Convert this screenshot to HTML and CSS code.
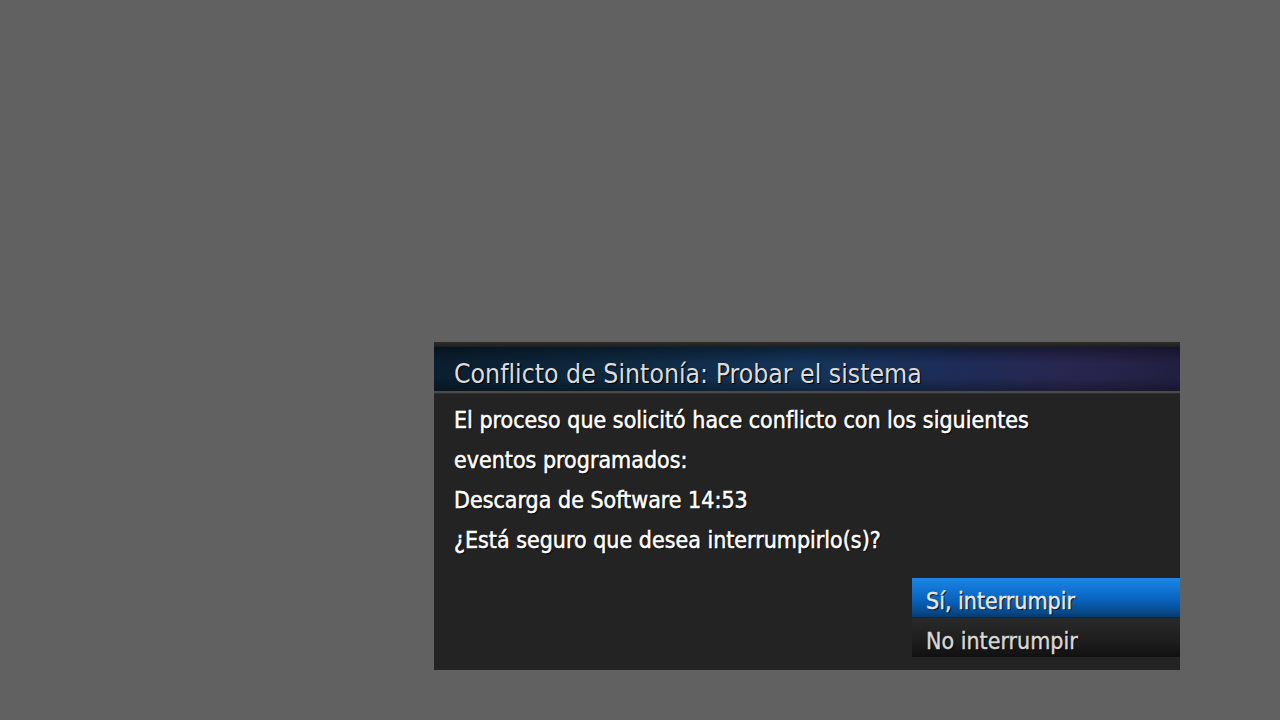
FILE: index.html
```html
<!DOCTYPE html>
<html lang="es">
<head>
<meta charset="utf-8">
<title>Conflicto de Sintonía</title>
<link rel="stylesheet" href="styles.css">
</head>
<body>
<div class="stage">
  <div class="dialog">
    <div class="topstrip"></div>
    <div class="header">Conflicto de Sintonía: Probar el sistema</div>
    <div class="rule"></div>
    <div class="body">
      <p class="line">El proceso que solicitó hace conflicto con los siguientes</p>
      <p class="line">eventos programados:</p>
      <p class="line">Descarga de Software 14:53</p>
      <p class="line">¿Está seguro que desea interrumpirlo(s)?</p>
    </div>
    <div class="options">
      <div class="opt opt-sel">Sí, interrumpir</div>
      <div class="opt opt-norm">No interrumpir</div>
    </div>
  </div>
</div>
</body>
</html>
```
FILE: styles.css
```css
html, body {
  margin: 0;
  padding: 0;
  background: #616161;
}
.stage {
  width: 1280px;
  height: 720px;
  display: flex;
  padding: 342px 0 0 434px;
  box-sizing: border-box;
}
.dialog {
  width: 746px;
  height: 328px;
  background: #232323;
  display: flex;
  flex-direction: column;
  font-family: "DejaVu Sans", sans-serif;
  font-stretch: condensed;
}
.topstrip {
  height: 5px;
  background: linear-gradient(180deg, #2c2c2c, #1e1e1e);
}
.header {
  height: 44px;
  background:
    linear-gradient(180deg, rgba(0,0,0,0.35) 0%, rgba(0,0,0,0) 35%, rgba(0,0,0,0) 70%, rgba(0,0,0,0.3) 100%),
    linear-gradient(90deg, #0a1e2e 0%, #0e2940 25%, #14345a 50%, #1c2d58 68%, #28264f 85%, #211f40 100%);
  color: #dcdcdc;
  font-size: 26.4px;
  line-height: 54px;
  padding-left: 20px;
  overflow: hidden;
  text-shadow: 1px 1px 1px #000;
}
.rule {
  height: 2px;
  background: #4a4a4a;
  border-bottom: 1px solid #2e2e2e;
}
.body {
  padding: 6px 0 0 20px;
  color: #ffffff;
  font-size: 23px;
  -webkit-text-stroke: 0.5px #ffffff;
}
.line {
  margin: 0;
  height: 40px;
  line-height: 40px;
  text-shadow: 1px 1px 1px #000;
}
.options {
  margin-top: 18px;
  margin-left: 478px;
  display: flex;
  flex-direction: column;
}
.opt {
  height: 39px;
  line-height: 46px;
  padding-left: 14px;
  font-size: 23px;
  -webkit-text-stroke: 0.4px currentColor;
  color: #e8e8e8;
  text-shadow: 1px 1px 1px #000;
}
.opt-sel {
  background: linear-gradient(180deg, #1b86e6 0%, #0a67c4 50%, #074c91 85%, #063a6d 100%);
  border-bottom: 1px solid #0a2a44;
}
.opt-norm {
  background: linear-gradient(180deg, #2a2a2a 0%, #1d1d1d 60%, #111111 100%);
  color: #d8d8d8;
}
```
